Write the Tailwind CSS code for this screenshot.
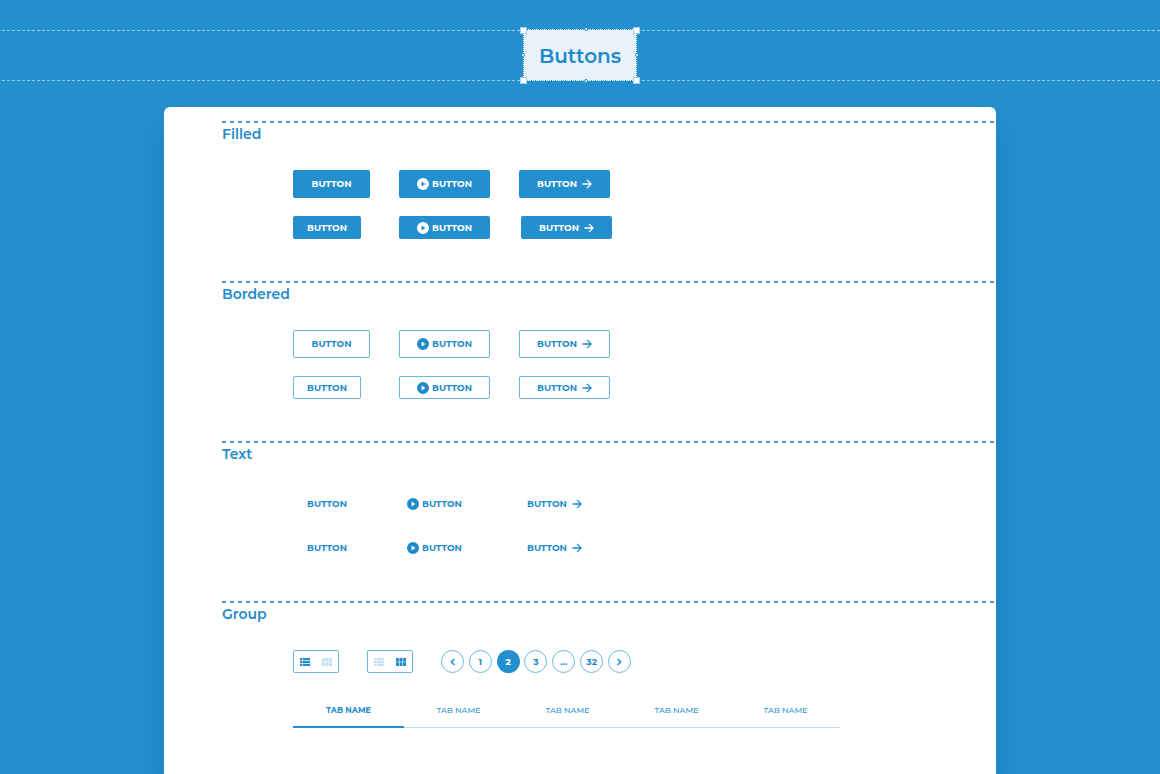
<!DOCTYPE html>
<html lang="en">
<head>
<meta charset="utf-8">
<meta name="viewport" content="width=device-width, initial-scale=1">
<title>Buttons</title>
<script src="https://cdn.jsdelivr.net/npm/@tailwindcss/browser@4"></script>
</head>
<body class="flex min-h-screen flex-col bg-[#248fcf] font-[Montserrat,Inter,sans-serif] text-[#1f8bcb]">

<svg class="hidden" aria-hidden="true">
  <symbol id="play" viewBox="0 0 12 12"><path fill-rule="evenodd" fill="currentColor" d="M6 0a6 6 0 1 0 0 12A6 6 0 0 0 6 0ZM4.6 3.5v5L8.5 6Z"/></symbol>
  <symbol id="arrow" viewBox="0 0 10 10"><path fill="none" stroke="currentColor" stroke-width="1.3" d="M.5 5h8.4M5 .9 9.1 5 5 9.1"/></symbol>
  <symbol id="list" viewBox="0 0 10 8"><path fill="currentColor" d="M0 0h2.4v2.3H0zM3 0h7v2.3H3zM0 2.9h2.4v2.2H0zM3 2.9h7v2.2H3zM0 5.7h2.4V8H0zM3 5.7h7V8H3z"/></symbol>
  <symbol id="tiles" viewBox="0 0 10 8"><path fill="currentColor" d="M0 0h2.9v3.7H0zM3.55 0h2.9v3.7h-2.9zM7.1 0H10v3.7H7.1zM0 4.3h2.9V8H0zM3.55 4.3h2.9V8h-2.9zM7.1 4.3H10V8H7.1z"/></symbol>
  <symbol id="prev" viewBox="0 0 8 8"><path fill="none" stroke="currentColor" stroke-width="1.5" d="M5.4 1 2.4 4l3 3"/></symbol>
  <symbol id="next" viewBox="0 0 8 8"><path fill="none" stroke="currentColor" stroke-width="1.5" d="m2.6 1 3 3-3 3"/></symbol>
</svg>

<header class="relative mt-[29px] flex justify-center">
  <div class="absolute inset-x-0 top-px h-px bg-[repeating-linear-gradient(90deg,transparent_0_2px,#93c9ea_2px_5px)]"></div>
  <div class="absolute inset-x-0 bottom-0 h-px bg-[repeating-linear-gradient(90deg,transparent_0_2px,#93c9ea_2px_5px)]"></div>
  <div class="relative border border-dotted border-white bg-[#e9f1fb] bg-clip-padding px-[15px] pt-[11px] pb-[9px]">
    <h1 class="text-[20px] leading-[30px] font-semibold">Buttons</h1>
    <i class="absolute -top-[3px] -left-1 size-[7px] border border-[#9fd0ee] bg-white"></i>
    <i class="absolute -top-[3px] -right-1 size-[7px] border border-[#9fd0ee] bg-white"></i>
    <i class="absolute -bottom-1 -left-1 size-[7px] border border-[#9fd0ee] bg-white"></i>
    <i class="absolute -right-1 -bottom-1 size-[7px] border border-[#9fd0ee] bg-white"></i>
    <i class="absolute -top-[3px] left-[60px] size-1 rounded-full border border-[#248fcf] bg-white"></i>
    <i class="absolute -bottom-[3px] left-[60px] size-1 rounded-full border border-[#248fcf] bg-white"></i>
    <i class="absolute top-1/2 -left-[3px] size-1 -translate-y-1/2 rounded-full border border-[#248fcf] bg-white"></i>
    <i class="absolute top-1/2 -right-[3px] size-1 -translate-y-1/2 rounded-full border border-[#248fcf] bg-white"></i>
  </div>
</header>

<main class="mx-auto mt-[26px] w-full max-w-[832px] flex-1 rounded-t-md bg-white pt-3.5 pl-[58px] shadow-[0_20px_28px_#0a5fa059]">

  <section class="pb-[42px]">
    <div class="h-0.5 bg-[repeating-linear-gradient(90deg,#4a9fd2_0_4px,transparent_4px_8px)]"></div>
    <h2 class="text-sm leading-[22px] font-semibold">Filled</h2>
    <div class="mt-[25px] flex flex-col gap-[18px] pl-[71px] text-[9px] font-bold text-white">
      <div class="grid grid-cols-[106px_120px_auto] justify-items-start">
        <button class="h-7 w-[77px] rounded-xs bg-[#248fcf]">BUTTON</button>
        <button class="flex h-7 w-[91px] items-center justify-center gap-[3px] rounded-xs bg-[#248fcf]"><svg class="size-3"><use href="#play"/></svg>BUTTON</button>
        <button class="flex h-7 w-[91px] items-center justify-center gap-[5px] rounded-xs bg-[#248fcf]">BUTTON<svg class="size-2.5"><use href="#arrow"/></svg></button>
      </div>
      <div class="grid grid-cols-[106px_122px_auto] justify-items-start">
        <button class="h-[23px] w-[68px] rounded-xs bg-[#248fcf]">BUTTON</button>
        <button class="flex h-[23px] w-[91px] items-center justify-center gap-[3px] rounded-xs bg-[#248fcf]"><svg class="size-3"><use href="#play"/></svg>BUTTON</button>
        <button class="flex h-[23px] w-[91px] items-center justify-center gap-[5px] rounded-xs bg-[#248fcf]">BUTTON<svg class="size-2.5"><use href="#arrow"/></svg></button>
      </div>
    </div>
  </section>

  <section class="pb-[42px]">
    <div class="h-0.5 bg-[repeating-linear-gradient(90deg,#4a9fd2_0_4px,transparent_4px_8px)]"></div>
    <h2 class="text-sm leading-[22px] font-semibold">Bordered</h2>
    <div class="mt-[25px] flex flex-col gap-[18px] pl-[71px] text-[9px] font-bold">
      <div class="grid grid-cols-[106px_120px_auto] justify-items-start">
        <button class="h-7 w-[77px] rounded-xs border border-[#6db6e0]">BUTTON</button>
        <button class="flex h-7 w-[91px] items-center justify-center gap-[3px] rounded-xs border border-[#6db6e0]"><svg class="size-3"><use href="#play"/></svg>BUTTON</button>
        <button class="flex h-7 w-[91px] items-center justify-center gap-[5px] rounded-xs border border-[#6db6e0]">BUTTON<svg class="size-2.5"><use href="#arrow"/></svg></button>
      </div>
      <div class="grid grid-cols-[106px_120px_auto] justify-items-start">
        <button class="h-[23px] w-[68px] rounded-xs border border-[#6db6e0]">BUTTON</button>
        <button class="flex h-[23px] w-[91px] items-center justify-center gap-[3px] rounded-xs border border-[#6db6e0]"><svg class="size-3"><use href="#play"/></svg>BUTTON</button>
        <button class="flex h-[23px] w-[91px] items-center justify-center gap-[5px] rounded-xs border border-[#6db6e0]">BUTTON<svg class="size-2.5"><use href="#arrow"/></svg></button>
      </div>
    </div>
  </section>

  <section class="pb-[42px]">
    <div class="h-0.5 bg-[repeating-linear-gradient(90deg,#4a9fd2_0_4px,transparent_4px_8px)]"></div>
    <h2 class="text-sm leading-[22px] font-semibold">Text</h2>
    <div class="mt-[25px] flex flex-col gap-[18px] pl-[71px] text-[9px] font-bold">
      <div class="grid grid-cols-[106px_120px_auto] justify-items-start">
        <button class="h-7 w-[68px]">BUTTON</button>
        <button class="flex h-7 items-center gap-[3px] px-2"><svg class="size-3"><use href="#play"/></svg>BUTTON</button>
        <button class="flex h-7 items-center gap-[5px] px-2">BUTTON<svg class="size-2.5"><use href="#arrow"/></svg></button>
      </div>
      <div class="grid grid-cols-[106px_120px_auto] justify-items-start">
        <button class="h-[23px] w-[68px]">BUTTON</button>
        <button class="flex h-[23px] items-center gap-[3px] px-2"><svg class="size-3"><use href="#play"/></svg>BUTTON</button>
        <button class="flex h-[23px] items-center gap-[5px] px-2">BUTTON<svg class="size-2.5"><use href="#arrow"/></svg></button>
      </div>
    </div>
  </section>

  <section>
    <div class="h-0.5 bg-[repeating-linear-gradient(90deg,#4a9fd2_0_4px,transparent_4px_8px)]"></div>
    <h2 class="text-sm leading-[22px] font-semibold">Group</h2>
    <div class="mt-[25px] flex gap-7 pl-[71px] text-[9px] font-bold">
      <div class="grid h-[23px] w-[46px] grid-cols-2 rounded-xs border border-[#6db6e0]">
        <button class="grid place-items-center" aria-label="List view" aria-pressed="true"><svg class="h-2 w-2.5"><use href="#list"/></svg></button>
        <button class="grid place-items-center text-[#c5e1f3]" aria-label="Grid view" aria-pressed="false"><svg class="h-2 w-2.5"><use href="#tiles"/></svg></button>
      </div>
      <div class="grid h-[23px] w-[46px] grid-cols-2 rounded-xs border border-[#6db6e0]">
        <button class="grid place-items-center text-[#c5e1f3]" aria-label="List view" aria-pressed="false"><svg class="h-2 w-2.5"><use href="#list"/></svg></button>
        <button class="grid place-items-center" aria-label="Grid view" aria-pressed="true"><svg class="h-2 w-2.5"><use href="#tiles"/></svg></button>
      </div>
      <nav class="flex w-[190px] justify-between" aria-label="Pagination">
        <button class="grid size-[23px] place-items-center rounded-full border border-[#6db6e0]" aria-label="Previous page"><svg class="size-2"><use href="#prev"/></svg></button>
        <button class="grid size-[23px] place-items-center rounded-full border border-[#6db6e0]">1</button>
        <button class="grid size-[23px] place-items-center rounded-full bg-[#248fcf] text-white" aria-current="page">2</button>
        <button class="grid size-[23px] place-items-center rounded-full border border-[#6db6e0]">3</button>
        <button class="grid size-[23px] place-items-center rounded-full border border-[#6db6e0]">...</button>
        <button class="grid size-[23px] place-items-center rounded-full border border-[#6db6e0]">32</button>
        <button class="grid size-[23px] place-items-center rounded-full border border-[#6db6e0]" aria-label="Next page"><svg class="size-2"><use href="#next"/></svg></button>
      </nav>
    </div>
    <div class="mt-[27px] ml-[71px] grid max-w-[547px] grid-cols-[111px_repeat(4,1fr)] text-[8px] leading-5 text-[#3497d1]" role="tablist">
      <button role="tab" aria-selected="true" class="border-b-2 border-[#248fcf] pb-1.5 font-bold text-[#1f8bcb]">TAB NAME</button>
      <button role="tab" aria-selected="false" class="border-b border-[#b5dcf2] pb-[7px] font-medium">TAB NAME</button>
      <button role="tab" aria-selected="false" class="border-b border-[#b5dcf2] pb-[7px] font-medium">TAB NAME</button>
      <button role="tab" aria-selected="false" class="border-b border-[#b5dcf2] pb-[7px] font-medium">TAB NAME</button>
      <button role="tab" aria-selected="false" class="border-b border-[#b5dcf2] pb-[7px] font-medium">TAB NAME</button>
    </div>
  </section>
</main>
</body>
</html>
